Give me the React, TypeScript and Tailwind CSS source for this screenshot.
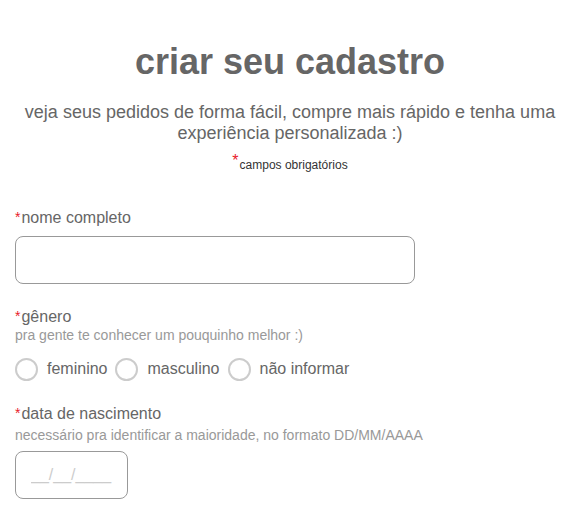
import React from "react";

function Req() {
  return <span className="text-[#e8202a] text-[14px] align-top relative top-[-1px] mr-[1px]">*</span>;
}

function Radio({ label }: { label: string }) {
  return (
    <label className="flex items-center">
      <span className="w-[23px] h-[23px] rounded-full border-2 border-[#cccccc] bg-white" />
      <span className="ml-[9px] mr-[8px] text-[16px] text-[#666666]">{label}</span>
    </label>
  );
}

export default function App() {
  return (
    <div className="bg-white min-h-[513px] pl-[15px] pr-[1px] pt-[41px]" style={{ fontFamily: '"Liberation Sans", Arial, sans-serif' }}>
      <h1 className="text-center text-[36px] font-bold text-[#666666] leading-[41px]">criar seu cadastro</h1>
      <p className="mt-[20px] text-center text-[18px] leading-[21px] text-[#666666]">
        veja seus pedidos de forma fácil, compre mais rápido e tenha uma experiência personalizada :)
      </p>
      <p className="mt-[13px] text-center text-[12px] leading-[14px] text-[#333333]">
        <span className="text-[#e8202a] text-[16px] leading-[14px] relative top-[-3px] mr-[1px]">*</span>campos obrigatórios
      </p>

      <div className="mt-[37px] text-[16px] leading-[18px] text-[#666666]">
        <Req />nome completo
      </div>
      <input className="mt-[9px] block w-[400px] h-[48px] rounded-[8px] border border-[#999999] outline-none" />

      <div className="mt-[24px] text-[16px] leading-[18px] text-[#666666]">
        <Req />gênero
      </div>
      <div className="text-[14px] leading-[16px] text-[#999999] mt-[1px]">pra gente te conhecer um pouquinho melhor :)</div>
      <div className="flex mt-[14px]">
        <Radio label="feminino" />
        <Radio label="masculino" />
        <Radio label="não informar" />
      </div>

      <div className="mt-[24px] text-[16px] leading-[18px] text-[#666666]">
        <Req />data de nascimento
      </div>
      <div className="text-[14px] leading-[16px] text-[#999999] mt-[4px]">necessário pra identificar a maioridade, no formato DD/MM/AAAA</div>
      <input
        className="mt-[8px] block w-[113px] h-[48px] rounded-[8px] border border-[#999999] outline-none pl-[15px] text-[16px] placeholder:text-[#cccccc]"
        placeholder="__/__/____"
        style={{ fontFamily: '"Liberation Sans", Arial, sans-serif' }}
      />
    </div>
  );
}
